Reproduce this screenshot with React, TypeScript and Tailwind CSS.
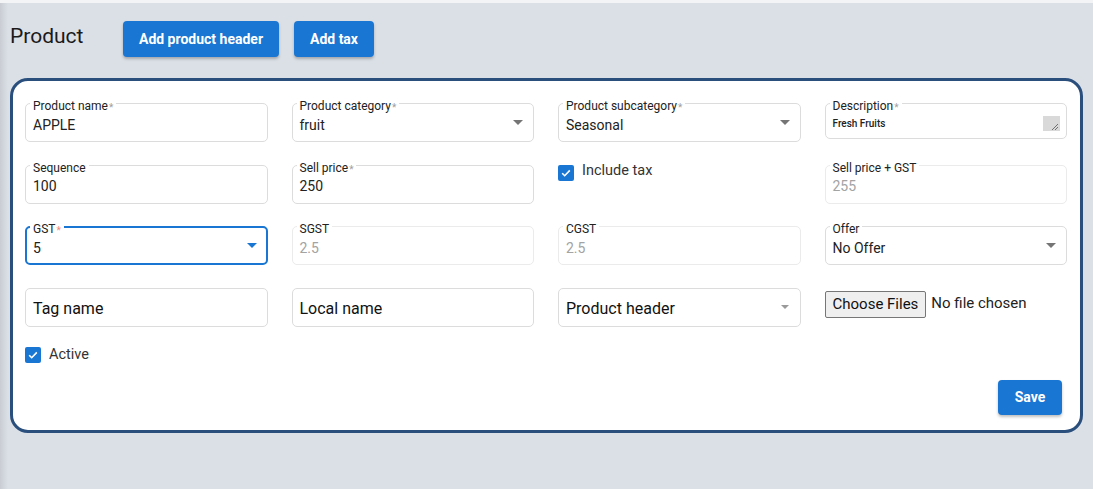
import React from "react";

const Arrow = ({ color = "#757575", w = 10, h = 5 }: { color?: string; w?: number; h?: number }) => (
  <svg width={w} height={h} viewBox="0 0 10 5" className="block">
    <path d="M0 0h10L5 5z" fill={color} />
  </svg>
);

const Check = () => (
  <div className="w-[16px] h-[16px] rounded-[2px] bg-[#1976d2] flex items-center justify-center shrink-0">
    <svg width="12" height="12" viewBox="0 0 12 12">
      <path d="M2.2 6.2l2.5 2.5 5.1-5.3" stroke="#fff" strokeWidth="1.6" fill="none" />
    </svg>
  </div>
);

type FieldProps = {
  label: string;
  value: string;
  required?: boolean;
  disabled?: boolean;
  select?: boolean;
  focused?: boolean;
};

const Field = ({ label, value, required, disabled, select, focused }: FieldProps) => (
  <div
    className={
      focused
        ? "relative h-[39px] rounded-[5px] border-2 border-[#1976d2]"
        : disabled
        ? "relative h-[39px] rounded-[5px] border border-[#ebebeb]"
        : "relative h-[39px] rounded-[5px] border border-[#dcdcdc]"
    }
  >
    <span
      className={
        focused
          ? "absolute -top-[6px] left-[3px] px-[3px] bg-white text-[12px] leading-[14px] text-[#222]"
          : "absolute -top-[5px] left-[4px] px-[3px] bg-white text-[12px] leading-[14px] text-[#222]"
      }
    >
      {label}
      {required && (
        <span
          className={
            focused
              ? "relative top-[1px] ml-[1px] text-[10px] text-[#f08a7a]"
              : "relative top-[1px] ml-[1px] text-[10px] text-[#a0a0a0]"
          }
        >
          *
        </span>
      )}
    </span>
    <div
      className={
        (focused ? "px-[6px] pt-[11.5px] " : "px-[7px] pt-[12.5px] ") +
        (disabled ? "text-[14px] leading-[16px] text-[#a3a3a3]" : "text-[14px] leading-[16px] text-[#222]")
      }
    >
      {value}
    </div>
    {select && (
      <div className={focused ? "absolute right-[9px] top-[15px]" : "absolute right-[10px] top-[16px]"}>
        <Arrow color={focused ? "#1976d2" : "#757575"} />
      </div>
    )}
  </div>
);

const Plain = ({ text, select }: { text: string; select?: boolean }) => (
  <div className="relative h-[39px] rounded-[5px] border border-[#dcdcdc] flex items-center pt-[3px] px-[7px] text-[16px] text-[#111]">
    {text}
    {select && (
      <div className="absolute right-[11px] top-[16px]">
        <Arrow color="#9a9a9a" w={8} h={4} />
      </div>
    )}
  </div>
);

export default function App() {
  return (
    <div className="min-h-screen bg-[#dbe0e7] font-['Roboto',sans-serif] flex flex-col">
      <div className="h-[3px] bg-[#f3f4f6]" />
      <div className="flex flex-1">
        <div className="w-[8px] bg-gradient-to-r from-[#c9cdd3] to-[#dbe0e7]" />
        <div className="flex-1 pl-[2px] pr-[10px] pb-[56px]">
          <div className="flex items-start pt-[18px]">
            <div className="w-[113px] pt-[2.5px] text-[21px] leading-[24px] text-[#1a1a1a]">Product</div>
            <button className="h-[36px] w-[156px] rounded-[4px] bg-[#1976d2] text-white text-[14px] font-bold shadow-[0_2px_3px_rgba(0,0,0,0.25)]">
              Add product header
            </button>
            <button className="ml-[15px] h-[36px] w-[80px] rounded-[4px] bg-[#1976d2] text-white text-[14px] font-bold shadow-[0_2px_3px_rgba(0,0,0,0.25)]">
              Add tax
            </button>
          </div>

          <div className="mt-[21px] border-[3px] border-[#2a4f7d] rounded-[18px] bg-white pt-[22px] pl-[12px] pr-[13px] pb-[15px]">
            <div className="grid grid-cols-4 gap-x-[24px] gap-y-[22.5px]">
              <Field label="Product name" value="APPLE" required />
              <Field label="Product category" value="fruit" required select />
              <Field label="Product subcategory" value="Seasonal" required select />
              <div className="relative h-[36px] rounded-[5px] border border-[#dcdcdc]">
                <span className="absolute -top-[5px] left-[4px] px-[3px] bg-white text-[12px] leading-[14px] text-[#222]">
                  Description
                  <span className="relative top-[1px] ml-[1px] text-[10px] text-[#a0a0a0]">*</span>
                </span>
                <div className="px-[7px] pt-[14px] text-[10px] leading-[12px] text-[#222] font-medium">Fresh Fruits</div>
                <div className="absolute right-[6px] top-[12px] w-[17px] h-[15px] bg-[#d9d9d9]">
                  <svg width="17" height="15" viewBox="0 0 17 15" className="block">
                    <path d="M15 8L9 14M15 11L12 14" stroke="#555" strokeWidth="0.8" />
                  </svg>
                </div>
              </div>

              <Field label="Sequence" value="100" />
              <Field label="Sell price" value="250" required />
              <div className="flex items-start gap-[8px]">
                <Check />
                <span className="relative -top-[1.5px] text-[14.5px] leading-[16px] text-[#333]">Include tax</span>
              </div>
              <Field label="Sell price + GST" value="255" disabled />

              <Field label="GST" value="5" required select focused />
              <Field label="SGST" value="2.5" disabled />
              <Field label="CGST" value="2.5" disabled />
              <Field label="Offer" value="No Offer" select />

              <Plain text="Tag name" />
              <Plain text="Local name" />
              <Plain text="Product header" select />
              <div className="flex items-start pt-[3.5px] gap-[5px]">
                <span className="h-[27px] px-[7px] border border-[#767676] bg-[#efefef] rounded-[2px] text-[15px] leading-[25px] text-[#111]">
                  Choose Files
                </span>
                <span className="text-[15px] leading-[25px] text-[#222]">No file chosen</span>
              </div>
            </div>

            <div className="mt-[20px] flex items-center gap-[8px]">
              <Check />
              <span className="text-[14.5px] leading-[16px] text-[#333]">Active</span>
            </div>

            <div className="mt-[17.5px] flex justify-end pr-[5px]">
              <button className="h-[35px] w-[64px] rounded-[4px] bg-[#1976d2] text-white text-[14px] font-bold shadow-[0_2px_3px_rgba(0,0,0,0.25)]">
                Save
              </button>
            </div>
          </div>
        </div>
      </div>
    </div>
  );
}
